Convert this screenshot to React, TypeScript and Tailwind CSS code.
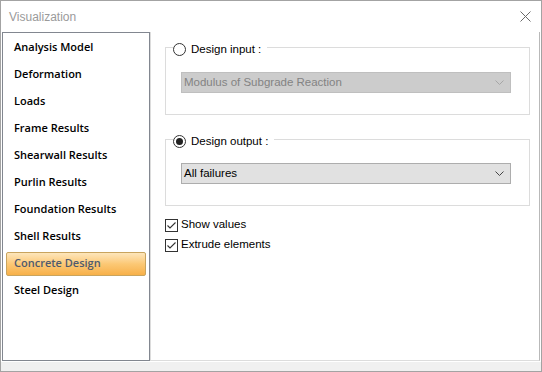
import { useState } from "react";

const items = [
  "Analysis Model",
  "Deformation",
  "Loads",
  "Frame Results",
  "Shearwall Results",
  "Purlin Results",
  "Foundation Results",
  "Shell Results",
  "Concrete Design",
  "Steel Design",
];

function Radio({ checked }: { checked: boolean }) {
  return (
    <span className="w-[13px] h-[13px] rounded-full border border-[#333] bg-white flex items-center justify-center">
      {checked && <span className="w-[7px] h-[7px] rounded-full bg-[#222]" />}
    </span>
  );
}

function Check() {
  return (
    <span className="w-[13px] h-[13px] border border-[#333] bg-white flex items-center justify-center">
      <svg width="11" height="11" viewBox="0 0 11 11">
        <path d="M1.5 5.5 L4 8 L9.5 2.5" fill="none" stroke="#333" strokeWidth="1.1" />
      </svg>
    </span>
  );
}

function Chevron({ color }: { color: string }) {
  return (
    <svg width="9" height="5" viewBox="0 0 9 5">
      <path d="M0.5 0.5 L4.5 4.5 L8.5 0.5" fill="none" stroke={color} strokeWidth="1" />
    </svg>
  );
}

export default function App() {
  const [active, setActive] = useState("Concrete Design");

  return (
    <div
      className="w-[542px] h-[372px] border border-[#a3a3a3] bg-white flex flex-col text-[11.5px] text-black"
      style={{ fontFamily: '"Liberation Sans", Arial, sans-serif' }}
    >
      {/* title */}
      <div className="h-[31px] flex items-center justify-between pl-[8px] pr-[10px] shrink-0">
        <span className="text-[#9a9a9a] text-[12px]">Visualization</span>
        <svg width="11" height="11" viewBox="0 0 11 11">
          <path d="M0.5 0.5 L10.5 10.5 M10.5 0.5 L0.5 10.5" stroke="#6a6a6a" strokeWidth="1" />
        </svg>
      </div>

      <div className="flex flex-1 pl-[1px] pr-[1px]">
        {/* list */}
        <div
          className="w-[148px] h-[329px] border border-[#828790] bg-white pt-[1px] shrink-0"
          style={{ fontFamily: '"Open Sans", "Liberation Sans", sans-serif' }}
        >
          {items.map((it) => (
            <div key={it} className="h-[27px] flex items-center px-[3px]" onClick={() => setActive(it)}>
              {active === it ? (
                <div className="w-full h-[24px] flex items-center pl-[7px] rounded-[2px] border border-[#c9a45e] bg-gradient-to-b from-[#fde6bb] via-[#fcc874] to-[#f7b048] text-[#4f5a6e] font-semibold text-[11px]">
                  {it}
                </div>
              ) : (
                <div className="pl-[8px] font-semibold text-[11px] text-black">{it}</div>
              )}
            </div>
          ))}
        </div>

        {/* right panel */}
        <div className="flex-1 h-[329px] border-l border-b border-r border-[#dcdcdc] border-r-[#b9b9b9] bg-white pl-[14px] pr-[9px] pt-[15px] flex flex-col">
          <div className="relative h-[68px] border border-[#dcdcdc] pl-[15px] pt-[24px]">
            <div className="absolute left-[7px] top-[-7px] bg-white flex items-center gap-[5px] pr-[6px]">
              <Radio checked={false} />
              <span>Design input :</span>
            </div>
            <div className="w-[330px] h-[21px] bg-[#cccccc] border border-[#bfbfbf] flex items-center justify-between pl-[2px] pr-[6px] text-[#838383]">
              <span>Modulus of Subgrade Reaction</span>
              <Chevron color="#a6a6a6" />
            </div>
          </div>

          <div className="relative h-[67px] mt-[24px] border border-[#dcdcdc] pl-[15px] pt-[23px]">
            <div className="absolute left-[7px] top-[-7px] bg-white flex items-center gap-[5px] pr-[6px]">
              <Radio checked={true} />
              <span>Design output :</span>
            </div>
            <div className="w-[330px] h-[21px] bg-[#e1e1e1] border border-[#adadad] flex items-center justify-between pl-[2px] pr-[6px]">
              <span>All failures</span>
              <Chevron color="#444" />
            </div>
          </div>

          <label className="flex items-center gap-[3px] mt-[12px] h-[14px]">
            <Check />
            <span>Show values</span>
          </label>
          <label className="flex items-center gap-[3px] mt-[6px] h-[14px]">
            <Check />
            <span>Extrude elements</span>
          </label>
        </div>
      </div>

      <div className="h-[9px] bg-[#f0f0f0] shrink-0" />
    </div>
  );
}
